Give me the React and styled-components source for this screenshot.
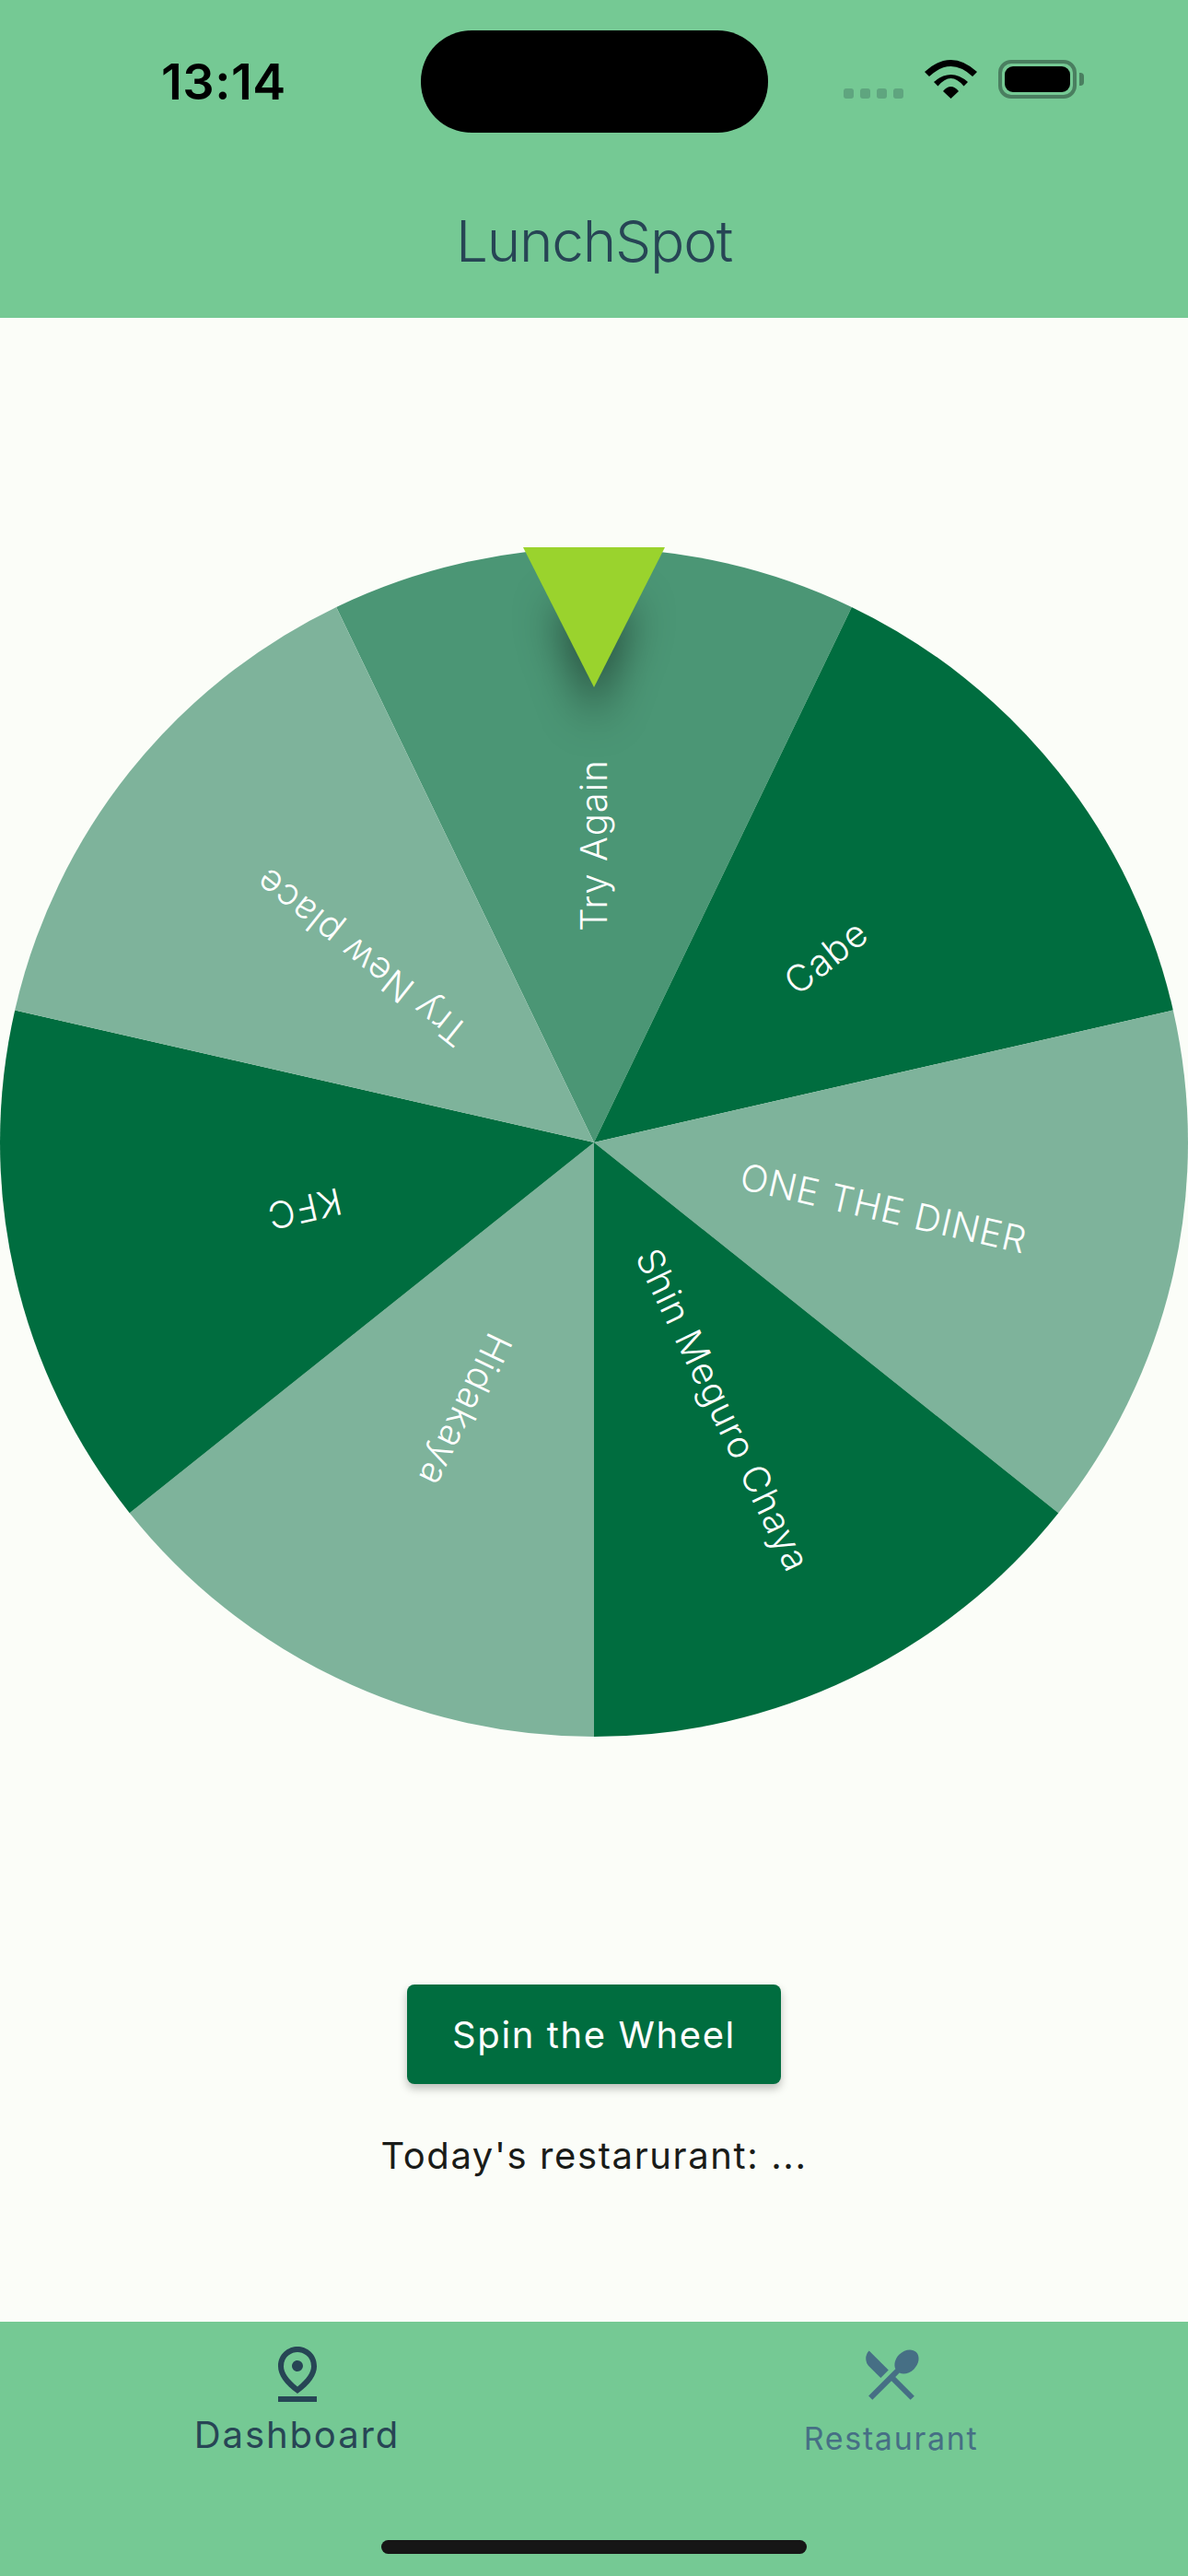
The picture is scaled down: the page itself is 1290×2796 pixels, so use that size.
import styled, { createGlobalStyle } from 'styled-components';
import { MdOutlinePinDrop, MdRestaurantMenu } from 'react-icons/md';

const DARK = '#006d3f';
const LIGHT = '#7eb39b';
const SELECTED = '#4b9675';

const SEGMENTS = [
  { label: 'Try Again', color: SELECTED },
  { label: 'Cabe', color: DARK },
  { label: 'ONE THE DINER', color: LIGHT },
  { label: 'Shin Meguro Chaya', color: DARK },
  { label: 'Hidakaya', color: LIGHT },
  { label: 'KFC', color: DARK },
  { label: 'Try New place', color: LIGHT }
];

const SIZE = 1290;
const RADIUS = SIZE / 2;
const STEP = 360 / SEGMENTS.length;

function pointAt(deg, r) {
  const rad = (deg * Math.PI) / 180;
  return [RADIUS + r * Math.sin(rad), RADIUS - r * Math.cos(rad)];
}

function slicePath(center) {
  const [x1, y1] = pointAt(center - STEP / 2, RADIUS);
  const [x2, y2] = pointAt(center + STEP / 2, RADIUS);
  return `M${RADIUS} ${RADIUS}L${x1} ${y1}A${RADIUS} ${RADIUS} 0 0 1 ${x2} ${y2}Z`;
}

function Wheel() {
  return (
    <WheelSvg viewBox={`0 0 ${SIZE} ${SIZE}`}>
      {SEGMENTS.map((s, i) => (
        <path key={s.label} d={slicePath(i * STEP)} fill={s.color} />
      ))}
      {SEGMENTS.map((s, i) => {
        const angle = i * STEP;
        const [x, y] = pointAt(angle, RADIUS / 2);
        return (
          <SliceLabel
            key={s.label}
            x={x}
            y={y}
            dy="14"
            transform={`rotate(${angle - 90} ${x} ${y})`}
          >
            {s.label}
          </SliceLabel>
        );
      })}
    </WheelSvg>
  );
}

export default function App() {
  return (
    <>
      <GlobalStyle />
      <Screen>
        <Header>
          <StatusBar>
            <Clock>13:14</Clock>
            <Island />
            <StatusIcons>
              <Signal>
                <SignalDot />
                <SignalDot />
                <SignalDot />
                <SignalDot />
              </Signal>
              <svg width="57" height="42" viewBox="0 0 57 42">
                <path d="M0 13Q28.5 -13 57 13L52 18Q28.5 -4 5 18Z" />
                <path d="M10 24Q28.5 8 47 24L42.5 28.5Q28.5 11.5 14.5 28.5Z" />
                <path d="M20 34Q28.5 24 37 34L28.5 42Z" />
              </svg>
              <Battery>
                <BatteryFill />
              </Battery>
              <BatteryCap />
            </StatusIcons>
          </StatusBar>
          <Title>LunchSpot</Title>
        </Header>

        <Main>
          <WheelBox>
            <Wheel />
            <Pointer viewBox="0 0 154 152">
              <PointerShadow points="34,66 120,66 77,190" />
              <polygon points="0,0 154,0 77,152" />
            </Pointer>
          </WheelBox>
          <SpinButton>Spin the Wheel</SpinButton>
          <Result>Today's restarurant: ...</Result>
        </Main>

        <NavBar>
          <Tabs>
            <Tab>
              <MdOutlinePinDrop size={72} color="#274555" />
              <TabLabel>Dashboard</TabLabel>
            </Tab>
            <Tab $inactive>
              <MdRestaurantMenu size={72} color="#466f85" />
              <TabLabel $inactive>Restaurant</TabLabel>
            </Tab>
          </Tabs>
          <HomeIndicator />
        </NavBar>
      </Screen>
    </>
  );
}

const GlobalStyle = createGlobalStyle`
  html, body {
    margin: 0;
    padding: 0;
    background: #fbfdf8;
    font-family: Inter, "Noto Sans", sans-serif;
  }
`;

const Screen = styled.div`
  width: 1290px;
  height: 2796px;
  display: flex;
  flex-direction: column;
  overflow: hidden;
`;

const Header = styled.header`
  height: 345px;
  flex: none;
  background: #75c994;
  display: flex;
  flex-direction: column;
  align-items: center;
`;

const StatusBar = styled.div`
  width: 100%;
  height: 111px;
  margin-top: 33px;
  display: grid;
  grid-template-columns: 457px 377px 1fr;
`;

const Clock = styled.div`
  padding: 24px 0 0 175px;
  font-size: 54px;
  line-height: 64px;
  font-weight: 600;
  letter-spacing: 0.5px;
  color: #000;
`;

const Island = styled.div`
  background: #000;
  border-radius: 55px;
`;

const StatusIcons = styled.div`
  display: flex;
  align-items: flex-start;
  padding: 32px 0 0 82px;

  svg {
    margin-left: 23px;
    display: block;
  }
`;

const Signal = styled.div`
  display: flex;
  gap: 7px;
  margin-top: 31px;
`;

const SignalDot = styled.span`
  width: 11px;
  height: 11px;
  border-radius: 3px;
  background: #5fa57f;
`;

const Battery = styled.div`
  width: 85px;
  height: 42px;
  margin-left: 23px;
  box-sizing: border-box;
  padding: 3px;
  border: 4px solid #4a7f60;
  border-radius: 14px;
  display: flex;
`;

const BatteryFill = styled.div`
  flex: 1;
  background: #000;
  border-radius: 9px;
`;

const BatteryCap = styled.div`
  width: 5px;
  height: 14px;
  margin: 14px 0 0 3px;
  background: #4a7f60;
  border-radius: 0 4px 4px 0;
`;

const Title = styled.h1`
  margin: 78px 0 0;
  font-size: 62px;
  line-height: 80px;
  font-weight: 300;
  letter-spacing: -1.2px;
  color: #274555;
`;

const Main = styled.main`
  flex: 1;
  background: #fbfdf8;
  display: flex;
  flex-direction: column;
  align-items: center;
  padding-top: 250px;
`;

const WheelBox = styled.div`
  position: relative;
  width: 1290px;
  height: 1290px;
`;

const WheelSvg = styled.svg`
  display: block;
  width: 100%;
  height: 100%;
`;

const SliceLabel = styled.text`
  fill: #fff;
  font-family: Inter, sans-serif;
  font-size: 40px;
  font-weight: 300;
  letter-spacing: 1px;
  text-anchor: middle;
`;

const Pointer = styled.svg`
  position: absolute;
  top: -1px;
  left: 568px;
  width: 154px;
  height: 152px;
  overflow: visible;
  fill: #9ad32d;
`;

const PointerShadow = styled.polygon`
  fill: rgba(0, 0, 0, 0.5);
  filter: blur(24px);
`;

const SpinButton = styled.button`
  margin-top: 269px;
  width: 406px;
  height: 108px;
  border: none;
  border-radius: 8px;
  background: #006d3f;
  color: #fff;
  font-family: Inter, sans-serif;
  font-size: 40px;
  letter-spacing: 1.6px;
  box-shadow: 0 5px 10px rgba(0, 0, 0, 0.25);
`;

const Result = styled.div`
  margin-top: 53px;
  font-size: 40px;
  line-height: 50px;
  letter-spacing: 1.6px;
  color: #1a1c19;
`;

const NavBar = styled.nav`
  height: 276px;
  flex: none;
  background: #75c994;
  display: flex;
  flex-direction: column;
  align-items: center;
`;

const Tabs = styled.div`
  width: 100%;
  height: 237px;
  display: grid;
  grid-template-columns: 1fr 1fr;
`;

const Tab = styled.div`
  display: flex;
  flex-direction: column;
  align-items: center;
  padding-top: 21px;
  gap: ${(p) => (p.$inactive ? '10px' : '6px')};
`;

const TabLabel = styled.span`
  font-size: ${(p) => (p.$inactive ? '34px' : '40px')};
  line-height: 48px;
  letter-spacing: ${(p) => (p.$inactive ? '1.7px' : '1.9px')};
  color: ${(p) => (p.$inactive ? '#466f85' : '#274555')};
`;

const HomeIndicator = styled.div`
  width: 462px;
  height: 15px;
  border-radius: 8px;
  background: #161616;
`;
